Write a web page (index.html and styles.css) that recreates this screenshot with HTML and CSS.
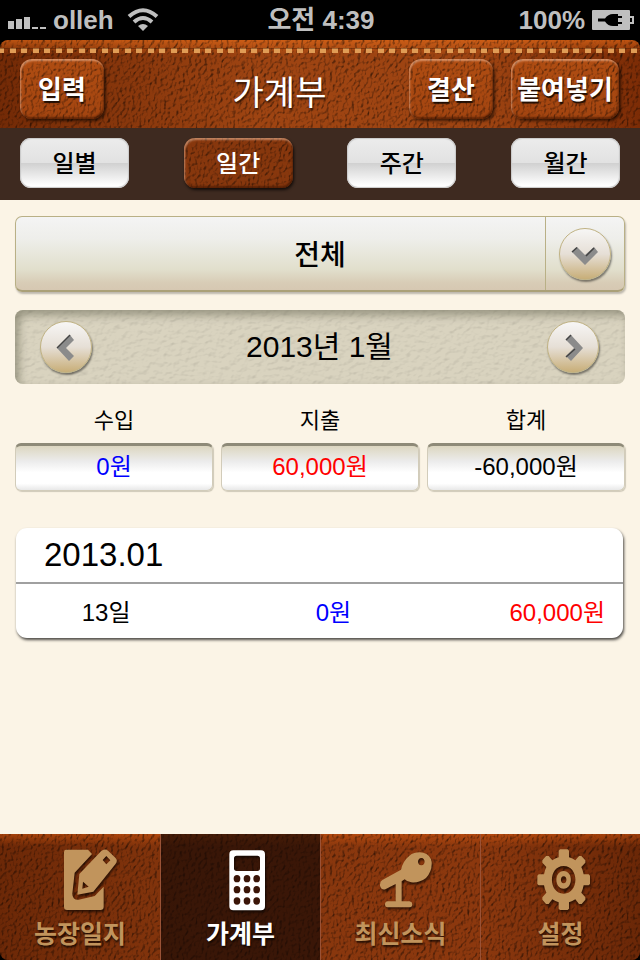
FILE: index.html
```html
<!DOCTYPE html>
<html lang="ko">
<head>
    <meta charset="UTF-8">
    <meta name="viewport" content="width=device-width, initial-scale=1.0">
    <title>가계부</title>
    <link rel="stylesheet" href="styles.css">
</head>
<body>

<!-- texture filters used by the stylesheet -->
<svg class="defs" width="0" height="0" aria-hidden="true">
    <filter id="leather" x="0" y="0" width="100%" height="100%" color-interpolation-filters="sRGB">
        <feTurbulence type="fractalNoise" baseFrequency="0.32 0.26" numOctaves="2" seed="7" result="noise"/>
        <feDiffuseLighting in="noise" surfaceScale="1.3" diffuseConstant="1.3" lighting-color="#fff" result="light">
            <feDistantLight azimuth="215" elevation="50"/>
        </feDiffuseLighting>
        <feComposite in="SourceGraphic" in2="light" operator="arithmetic" k1="1" k2="0" k3="0" k4="0"/>
    </filter>
    <filter id="paper" x="0" y="0" width="100%" height="100%" color-interpolation-filters="sRGB">
        <feTurbulence type="fractalNoise" baseFrequency="0.16 0.22" numOctaves="2" seed="3" result="noise"/>
        <feDiffuseLighting in="noise" surfaceScale="0.35" diffuseConstant="1.15" lighting-color="#fff" result="light">
            <feDistantLight azimuth="235" elevation="60"/>
        </feDiffuseLighting>
        <feComposite in="SourceGraphic" in2="light" operator="arithmetic" k1="1" k2="0" k3="0" k4="0"/>
    </filter>
</svg>

<div class="status">
    <div class="status-left">
        <svg width="38" height="14" viewBox="0 0 38 14" fill="#bfbfbf">
            <rect x="0" y="6" width="6" height="8"/>
            <rect x="8" y="4" width="6" height="10"/>
            <rect x="16" y="2" width="6" height="12"/>
            <rect x="24" y="12" width="6" height="2"/>
            <rect x="32" y="12" width="6" height="2"/>
        </svg>
        <span>olleh</span>
        <svg class="wifi" width="32" height="24" viewBox="0 0 32 24" fill="none" stroke="#bfbfbf" stroke-width="4">
            <path d="M2 8.500Q16 -4 30 8.500"/>
            <path d="M7 14Q16 6 25 14"/>
            <path d="M16 23L11 18Q16 14 21 18Z" fill="#bfbfbf" stroke="none"/>
        </svg>
    </div>
    <span>오전 4:39</span>
    <div class="status-right">
        <span>100%</span>
        <svg width="42" height="20" viewBox="0 0 42 20">
            <rect x="0" y="0" width="38" height="20" rx="1" fill="#bfbfbf"/>
            <path d="M38 7H41V13H38" fill="none" stroke="#bfbfbf" stroke-width="2"/>
            <path d="M6 8.500H13Q16 4 21 4H26V6H30V8H26V12H30V14H26V16H21Q16 16 13 11.500H6Z" fill="#000"/>
        </svg>
    </div>
</div>

<header class="header leather">
    <button class="btn leather">입력</button>
    <h1>가계부</h1>
    <button class="btn leather">결산</button>
    <button class="btn btn-wide leather">붙여넣기</button>
</header>

<div class="tabs">
    <button class="tab">일별</button>
    <button class="tab active leather">일간</button>
    <button class="tab">주간</button>
    <button class="tab">월간</button>
</div>

<main>
    <div class="picker">
        <select aria-label="분류">
            <option>전체</option>
        </select>
        <span class="picker-arrow">
            <span class="round">
                <svg width="50" height="50" viewBox="0 0 50 50">
                    <path d="M12 23L17 18L25 26L34 18L38 23L25 36Z" fill="#8b8b8b"/>
                    <path d="M12 23L17 18.500M26 27L34 19" stroke="#444" stroke-width="1.500"/>
                </svg>
            </span>
        </span>
    </div>

    <div class="month">
        <button class="round" aria-label="이전 달">
            <svg width="50" height="50" viewBox="0 0 50 50">
                <path d="M16 26L29 13L33 18L25 26L33 34L28 39Z" fill="#8b8b8b"/>
                <path d="M16 26L29 13" stroke="#444" stroke-width="1.500"/>
            </svg>
        </button>
        <span>2013년 1월</span>
        <button class="round" aria-label="다음 달">
            <svg width="50" height="50" viewBox="0 0 50 50">
                <path d="M23 13L35 26L23 39L18 34L26 26L18 18Z" fill="#8b8b8b"/>
                <path d="M18 18L23 13M18 35L27 27" stroke="#444" stroke-width="1.500"/>
            </svg>
        </button>
    </div>

    <dl class="summary">
        <div>
            <dt>수입</dt>
            <dd class="income">0원</dd>
        </div>
        <div>
            <dt>지출</dt>
            <dd class="expense">60,000원</dd>
        </div>
        <div>
            <dt>합계</dt>
            <dd>-60,000원</dd>
        </div>
    </dl>

    <table class="list">
        <thead>
            <tr>
                <th colspan="3">2013.01</th>
            </tr>
        </thead>
        <tbody>
            <tr>
                <td>13일</td>
                <td class="income">0원</td>
                <td class="expense">60,000원</td>
            </tr>
        </tbody>
    </table>
</main>

<nav class="nav leather">
    <a href="#">
        <svg width="80" height="65" viewBox="120 65 240 195">
            <path d="M198 73H264L276 86L224 142L217 205Q217 224 236 223L284 212L311 184V244Q311 254 301 254H201Q192 254 192 244V80Q192 73 198 73Z"/>
            <path fill-rule="evenodd" d="M232 208L238 146L303 78Q314 68 325 77L346 97Q355 106 346 117L280 199ZM319 92L308 104L319 117L331 105ZM249 169L247 190L266 184Z"/>
        </svg>
        <span>농장일지</span>
    </a>
    <a href="#" class="active">
        <svg width="80" height="65" viewBox="600 65 240 195">
            <path fill-rule="evenodd" d="M697 75H780Q792 75 792 87V243Q792 255 780 255H697Q685 255 685 243V87Q685 75 697 75ZM707 91Q699 91 699 99V129Q699 137 707 137H769Q777 137 777 129V99Q777 91 769 91Z"/>
            <g fill="#3a1508">
                <ellipse cx="708" cy="160" rx="10" ry="11"/>
                <ellipse cx="738" cy="160" rx="10" ry="11"/>
                <ellipse cx="767" cy="160" rx="10" ry="11"/>
                <ellipse cx="708" cy="193" rx="10" ry="11"/>
                <ellipse cx="738" cy="193" rx="10" ry="11"/>
                <ellipse cx="767" cy="193" rx="10" ry="11"/>
                <ellipse cx="708" cy="227" rx="10" ry="11"/>
                <ellipse cx="738" cy="227" rx="10" ry="11"/>
                <ellipse cx="767" cy="227" rx="10" ry="11"/>
            </g>
        </svg>
        <span>가계부</span>
    </a>
    <a href="#">
        <svg width="80" height="65" viewBox="120 65 240 195">
            <path fill-rule="evenodd" d="M240 133Q245 108 265 91Q283 78 307 82Q328 87 332 110Q334 137 315 158Q295 173 271 171Q258 170 251 162L242 168V228H266Q274 230 274 237Q274 246 266 246H200Q192 246 192 237Q192 229 200 228H224V176L193 192Q181 195 177 181Q176 168 184 164ZM301 98C288 98 288 120 301 120C314 120 314 98 301 98Z"/>
        </svg>
        <span>최신소식</span>
    </a>
    <a href="#">
        <svg width="80" height="65" viewBox="600 65 240 195">
            <path fill-rule="evenodd" d="M717 72H740L744 76V96Q755 99 763 105L774 92H781L793 105V112L781 125Q786 135 788 147H803L807 151V176L803 180H788Q786 191 781 202L793 216V223L782 236H774L763 222Q754 228 744 231V250L740 254H717L713 250V231Q703 228 694 222L683 236H675L664 223V216L676 202Q671 191 669 180H653L649 176V151L653 147H669Q671 135 676 125L664 112V105L675 92H683L694 105Q702 99 713 96V76ZM728 122C681 122 681 205 728 205C775 205 775 122 728 122Z"/>
            <path fill-rule="evenodd" d="M728 137C699 137 699 190 728 190C757 190 757 137 728 137ZM728 153C739 153 739 174 728 174C717 174 717 153 728 153Z"/>
        </svg>
        <span>설정</span>
    </a>
</nav>

</body>
</html>
```
FILE: styles.css
```css
* {
    box-sizing: border-box;
}

body {
    font-family: "Liberation Sans", "Noto Sans CJK KR", sans-serif;
    display: flex;
    flex-direction: column;
    min-height: 100vh;
    margin: 0;
    background-color: #fbf4e6;
    color: #000;
}

button, select {
    font-family: inherit;
    border: none;
    padding: 0;
    cursor: pointer;
}

.defs {
    position: absolute;
}

/* status bar */
.status {
    display: grid;
    grid-template-columns: 1fr auto 1fr;
    align-items: center;
    height: 40px;
    padding: 0 6px 0 8px;
    background-color: #000;
    color: #bfbfbf;
    font-size: 26px;
    line-height: 40px;
    font-weight: bold;
}

.status-left, .status-right {
    display: flex;
    align-items: center;
    gap: 7px;
}

.status-left svg {
    margin-top: 4px;
}

.status-left .wifi {
    margin: 0 0 0 6px;
}

.status-right {
    justify-content: flex-end;
}

/* leather surfaces: the texture sits behind the content */
.leather {
    position: relative;
    isolation: isolate;
}

.leather::before {
    content: "";
    position: absolute;
    inset: 0;
    z-index: -1;
    border-radius: inherit;
    background: linear-gradient(#b04d12, #a24410);
    filter: url(#leather);
}

.header {
    display: flex;
    align-items: center;
    height: 88px;
    padding: 10px 21px 0 20px;
    background-color: #000;
}

.header::before {
    border-radius: 8px 8px 0 0;
    background:
        linear-gradient(rgba(235, 110, 25, 0.6), transparent 14px),
        linear-gradient(90deg, #732a06, #9e4412 40%, #9e4412 75%, #7c2c06);
}

/* stitching */
.header::after {
    content: "";
    position: absolute;
    top: 8px;
    left: 0;
    right: 0;
    height: 4px;
    background: linear-gradient(90deg, #e09c55 4px, transparent 4px, transparent 10px, #e09c55 10px, #e09c55 16px, transparent 16px, transparent 21px, #e09c55 21px) 0 0 / 23px 4px;
    border-top: 1px solid rgba(60, 20, 0, 0.4);
}

.header h1 {
    flex: 1;
    margin: 0;
    padding: 8px 0 0 46px;
    color: #fff;
    font-size: 34px;
    line-height: 48px;
    font-weight: normal;
    text-align: center;
    text-shadow: 1px 2px 2px rgba(0, 0, 0, 0.7);
}

.btn {
    width: 84px;
    height: 60px;
    padding-top: 2px;
    border-radius: 12px;
    background: none;
    color: #fff;
    font-size: 26px;
    line-height: 40px;
    font-weight: bold;
    text-shadow: 1px 2px 1px rgba(0, 0, 0, 0.8);
    box-shadow: 2px 2px 3px rgba(0, 0, 0, 0.6);
}

/* bevel over the texture */
.btn::after, .tab.active::after {
    content: "";
    position: absolute;
    inset: 0;
    z-index: -1;
    border-radius: inherit;
    box-shadow: inset 1px 2px 2px rgba(255, 210, 180, 0.5), inset -1px -2px 2px rgba(60, 20, 0, 0.6);
}

.btn-wide {
    width: 108px;
    margin-left: 18px;
}

/* period tabs */
.tabs {
    display: flex;
    justify-content: space-between;
    padding: 10px 20px 12px;
    background-color: #3e2a20;
}

.tab {
    width: 109px;
    height: 50px;
    padding-top: 2px;
    border-radius: 11px;
    background: linear-gradient(#ececec, #e2e2e2 49%, #d0d0d0 50%, #fff 95%);
    box-shadow: inset 0 0 1px 1px #c8c8c8;
    color: #000;
    font-size: 24px;
    line-height: 36px;
    font-weight: 500;
}

.tab.active {
    background: none;
    color: #fff;
    box-shadow: 1px 2px 3px rgba(0, 0, 0, 0.7);
}

.tab.active::before {
    background: #87370d;
}

main {
    padding: 16px 15px;
}

.round {
    display: block;
    width: 52px;
    height: 52px;
    border: 1px solid #c0b283;
    border-radius: 50%;
    background: linear-gradient(#f7f6f5, #e6dfd6 50%, #c8ae78);
    box-shadow: 1px 2px 2px rgba(0, 0, 0, 0.45);
}

.round svg {
    display: block;
}

/* category picker */
.picker {
    position: relative;
}

.picker select {
    appearance: none;
    display: block;
    width: 100%;
    height: 76px;
    padding-top: 4px;
    border: 1px solid #b9b086;
    border-bottom: 2px solid #aaa078;
    border-radius: 7px;
    background: linear-gradient(#f4f4f4, #eeeeea 30%, #e1dfcc 72%, #d8ccb6 90%, #d6c8b2);
    box-shadow: 1px 2px 2px rgba(0, 0, 0, 0.25);
    color: #000;
    font-size: 28px;
    font-weight: 500;
    text-align: center;
    text-align-last: center;
}

.picker-arrow {
    position: absolute;
    top: 1px;
    right: 1px;
    bottom: 2px;
    display: flex;
    align-items: center;
    padding: 0 13px;
    border-left: 1px solid #b9b086;
    pointer-events: none;
}

/* month switcher */
.month {
    position: relative;
    isolation: isolate;
    display: flex;
    align-items: center;
    justify-content: space-between;
    height: 74px;
    margin-top: 18px;
    padding: 0 26px 0 25px;
    font-size: 30px;
    line-height: 44px;
}

.month::before, .month::after {
    content: "";
    position: absolute;
    inset: 0;
    z-index: -1;
    border-radius: 8px;
}

.month::before {
    background-color: #d9d3bf;
    filter: url(#paper);
}

.month::after {
    box-shadow: inset 4px 5px 8px rgba(90, 90, 70, 0.5);
}

/* totals */
.summary {
    display: grid;
    grid-template-columns: repeat(3, 1fr);
    gap: 8px;
    margin: 18px 0 0;
    font-size: 24px;
    text-align: center;
}

.summary dt {
    font-size: 22px;
    line-height: 38px;
    margin-bottom: 3px;
}

.summary dd {
    height: 48px;
    margin: 0;
    border: 1px solid #d2ccba;
    border-top: 3px solid #8e8a78;
    border-radius: 6px;
    background: linear-gradient(#dcd6c0, #ececec 35%, #fff 60%, #fff 85%, #e8e8e8);
    line-height: 42px;
    box-shadow: 1px 1px 1px #cfc9b8;
}

.income {
    color: #00f;
}

.expense {
    color: #f00;
}

/* daily list */
.list {
    width: calc(100% - 3px);
    margin: 37px 2px 0 1px;
    border-collapse: separate;
    border-spacing: 0;
    table-layout: fixed;
    border-radius: 11px;
    background-color: #fff;
    box-shadow: 1px 2px 3px rgba(0, 0, 0, 0.7);
    font-size: 24px;
}

.list th {
    height: 56px;
    padding: 0 28px;
    border-bottom: 2px solid #a0a0a0;
    font-size: 33px;
    line-height: 40px;
    font-weight: normal;
    text-align: left;
}

.list td {
    height: 54px;
    padding: 4px 0 0;
    line-height: 36px;
    text-align: center;
}

.list td:first-child {
    padding-right: 22px;
}

.list td:nth-child(2) {
    padding-left: 28px;
}

.list td:last-child {
    padding-right: 18px;
    text-align: right;
}

/* bottom navigation */
.nav {
    display: grid;
    grid-template-columns: repeat(4, 1fr);
    margin-top: auto;
    background-color: #000;
}

.nav::before {
    border-radius: 0 0 8px 8px;
    background:
        linear-gradient(rgba(220, 90, 15, 0.5), transparent 12px),
        linear-gradient(90deg, #6c2807, #86360d 30%, #8c380e 75%, #6a2707);
}

.nav a {
    display: flex;
    flex-direction: column;
    align-items: center;
    height: 126px;
    padding-top: 13px;
    border-left: 1px solid #9a5236;
    color: #c1945c;
    font-size: 25px;
    line-height: 44px;
    font-weight: bold;
    text-decoration: none;
    text-shadow: 1px 2px 2px rgba(0, 0, 0, 0.7);
}

.nav a:first-child {
    border-left: none;
}

.nav a.active {
    background-color: rgba(20, 8, 4, 0.68);
    color: #fff;
}

.nav svg {
    fill: currentColor;
    filter: drop-shadow(1px 2px 1px rgba(0, 0, 0, 0.6));
}
```
